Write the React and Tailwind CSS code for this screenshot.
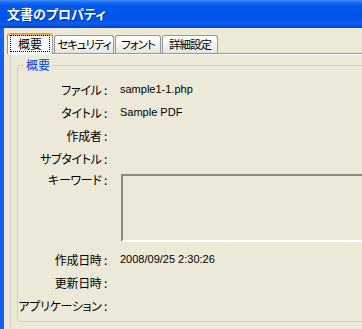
const labelFont = {
  fontFamily: '"Noto Sans CJK JP", "Noto Sans", sans-serif',
};

const rows = [
  { label: "ファイル", value: "sample1-1.php" },
  { label: "タイトル", value: "Sample PDF" },
  { label: "作成者", value: "" },
  { label: "サブタイトル", value: "" },
];

const rows2 = [
  { label: "作成日時", value: "2008/09/25 2:30:26" },
  { label: "更新日時", value: "" },
  { label: "アプリケーション", value: "" },
];

const Row = ({ label, value }) => (
  <div className="flex h-[23px] items-center">
    <div
      className="flex w-[89px] shrink-0 justify-end whitespace-nowrap text-[12px] leading-[16px] tracking-[-0.3px] text-black [font-feature-settings:'palt']"
      style={labelFont}
    >
      {label} :
    </div>
    <div className="ml-[13px] whitespace-nowrap font-['Liberation_Sans',Arial,sans-serif] text-[11px] text-black">
      {value}
    </div>
  </div>
);

const tabs = ["セキュリティ", "フォント", "詳細設定"];
const tabWidths = ["w-[60px]", "w-[46px]", "w-[56px]"];

const App = () => {
  return (
    <div className="flex h-[329px] w-[362px] flex-col overflow-hidden bg-[#ece9d8]">
      {/* title bar */}
      <div className="flex h-[28px] shrink-0 items-center bg-[linear-gradient(to_bottom,#3d8ef8_0px,#1668f0_3px,#0058ee_6px,#0054e6_20px,#0a5ff0_24px,#0348d6_27px)] pl-[7px]">
        <span
          className="whitespace-nowrap text-[13px] font-bold text-white [font-feature-settings:'palt'] [text-shadow:1px_1px_0_#0a2d8c]"
          style={labelFont}
        >
          文書のプロパティ
        </span>
      </div>

      {/* window body */}
      <div className="flex flex-1 flex-col border-l-[4px] border-[#1660ea] pl-[3px] pt-[5px]">
        {/* tabs */}
        <div className="flex h-[20px] items-end" style={labelFont}>
          <div className="relative z-10 -mb-px flex h-[21px] w-[46px] flex-col rounded-t-[3px] border-x border-[#919b9c] bg-[#fcfcfe]">
            <div className="h-[3px] rounded-t-[3px] bg-[linear-gradient(to_bottom,#e68b2c,#ffc73c)]" />
            <div className="mx-[2px] mt-[-1px] flex h-[17px] items-center justify-center whitespace-nowrap border border-dotted border-black text-[12px] text-black">
              概要
            </div>
          </div>
          {tabs.map((t, i) => (
            <div
              key={t}
              className={`${tabWidths[i]} ml-px flex h-[18px] items-center justify-center whitespace-nowrap rounded-t-[3px] border border-b-0 border-[#919b9c] bg-[linear-gradient(to_bottom,#ffffff,#f3f3ef_60%,#e4e3dc)] text-[11.5px] tracking-[-1px] text-black [font-feature-settings:'palt']`}
            >
              {t}
            </div>
          ))}
        </div>

        {/* tab panel */}
        <div className="ml-[3px] flex w-[420px] flex-1 flex-col border-l border-t border-l-[#d0d0bf] border-t-[#919b9c] bg-[#ece9d8]">
          <div className="h-px bg-white" />
          <fieldset className="ml-[6px] mt-[2px] w-[400px] rounded-[4px] border border-[#d0d0bf] pb-[4px]">
            <legend
              className="ml-[6px] px-[2px] text-[12px] leading-[16px] text-[#0046d5]"
              style={labelFont}
            >
              概要
            </legend>
            <div className="flex flex-col pt-[5px]">
              {rows.map((r) => (
                <Row key={r.label} {...r} />
              ))}
              <div className="flex items-start">
                <div
                  className="mt-[2px] flex w-[89px] shrink-0 justify-end whitespace-nowrap text-[12px] leading-[16px] tracking-[-0.3px] text-black [font-feature-settings:'palt']"
                  style={labelFont}
                >
                  キーワード :
                </div>
                <div className="ml-[14px] mt-[4px] h-[68px] flex-1 border-2 border-b-white border-l-[#8a887c] border-r-white border-t-[#8a887c] bg-[#ece9d8]" />
              </div>
              <div className="mt-[6px]" />
              {rows2.map((r) => (
                <Row key={r.label} {...r} />
              ))}
            </div>
          </fieldset>
        </div>
      </div>
    </div>
  );
};

export default App;
